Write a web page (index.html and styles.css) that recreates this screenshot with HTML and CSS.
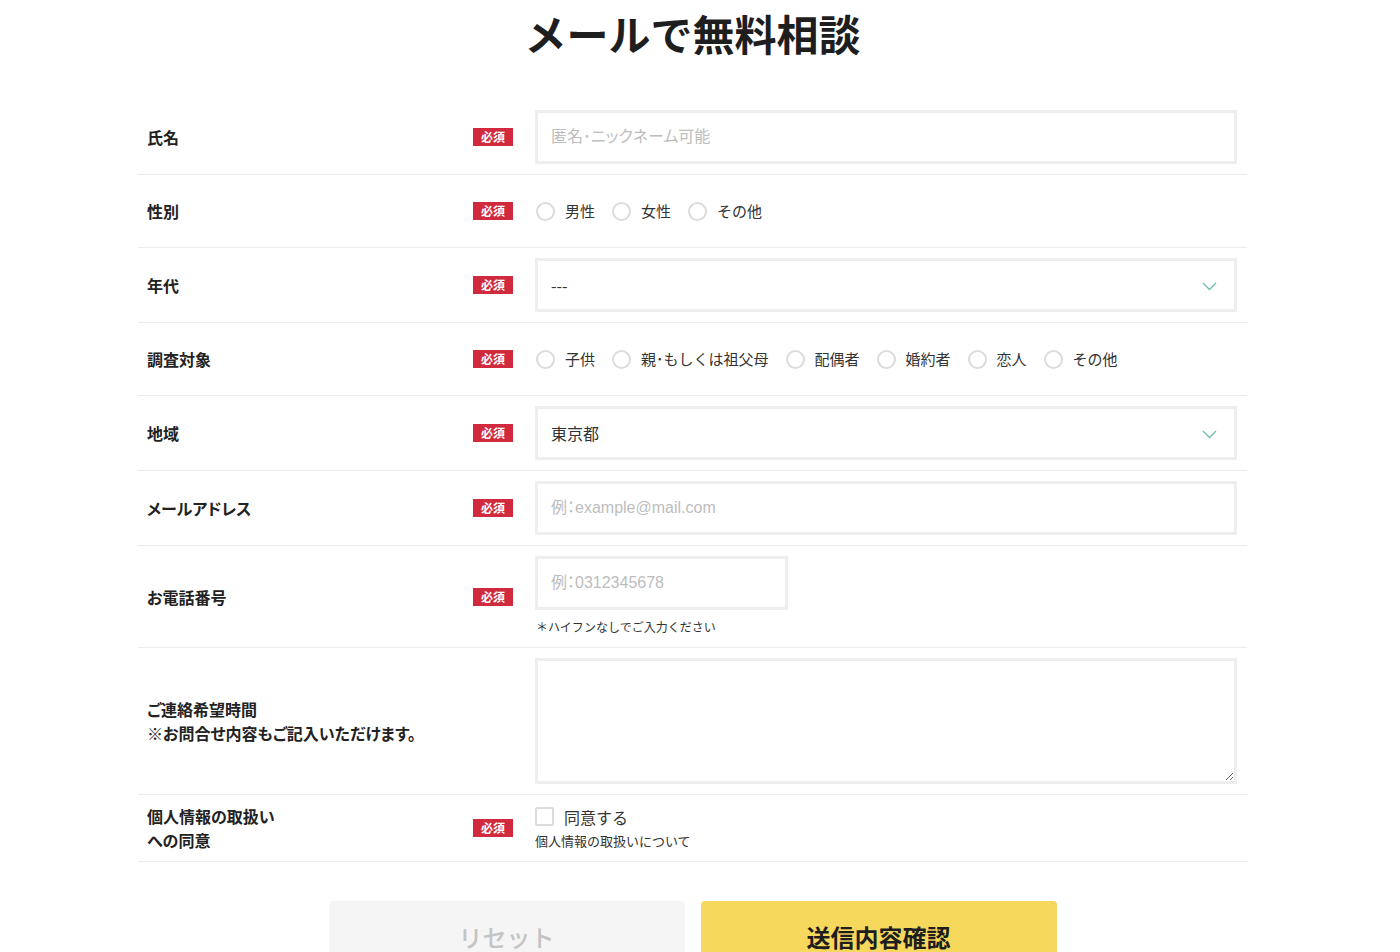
FILE: index.html
```html
<!DOCTYPE html>
<html lang="ja">
<head>
<meta charset="utf-8">
<title>メールで無料相談</title>
<link rel="stylesheet" href="styles.css">
</head>
<body>
<div class="page">
  <h1 class="title">メールで無料相談</h1>
  <form class="form">
    <div class="row">
      <div class="label">氏名</div>
      <div class="badge-cell"><span class="badge">必須</span></div>
      <div class="field"><input class="text-input" type="text" placeholder="匿名･ニックネーム可能"></div>
    </div>
    <div class="row">
      <div class="label">性別</div>
      <div class="badge-cell"><span class="badge">必須</span></div>
      <div class="field radios">
        <label class="radio"><span class="circle"></span>男性</label>
        <label class="radio"><span class="circle"></span>女性</label>
        <label class="radio"><span class="circle"></span>その他</label>
      </div>
    </div>
    <div class="row">
      <div class="label">年代</div>
      <div class="badge-cell"><span class="badge">必須</span></div>
      <div class="field">
        <div class="select">
          <span class="select-value">---</span>
          <svg class="chevron" width="15" height="9" viewBox="0 0 15 9"><polyline points="1,1 7.5,7.5 14,1" fill="none" stroke="#6dbcad" stroke-width="1.3"/></svg>
        </div>
      </div>
    </div>
    <div class="row">
      <div class="label">調査対象</div>
      <div class="badge-cell"><span class="badge">必須</span></div>
      <div class="field radios">
        <label class="radio"><span class="circle"></span>子供</label>
        <label class="radio"><span class="circle"></span>親･もしくは祖父母</label>
        <label class="radio"><span class="circle"></span>配偶者</label>
        <label class="radio"><span class="circle"></span>婚約者</label>
        <label class="radio"><span class="circle"></span>恋人</label>
        <label class="radio"><span class="circle"></span>その他</label>
      </div>
    </div>
    <div class="row">
      <div class="label">地域</div>
      <div class="badge-cell"><span class="badge">必須</span></div>
      <div class="field">
        <div class="select">
          <span class="select-value">東京都</span>
          <svg class="chevron" width="15" height="9" viewBox="0 0 15 9"><polyline points="1,1 7.5,7.5 14,1" fill="none" stroke="#6dbcad" stroke-width="1.3"/></svg>
        </div>
      </div>
    </div>
    <div class="row">
      <div class="label">メールアドレス</div>
      <div class="badge-cell"><span class="badge">必須</span></div>
      <div class="field"><input class="text-input" type="text" placeholder="例：example@mail.com"></div>
    </div>
    <div class="row">
      <div class="label">お電話番号</div>
      <div class="badge-cell"><span class="badge">必須</span></div>
      <div class="field">
        <input class="text-input tel" type="text" placeholder="例：0312345678">
        <p class="note">＊ハイフンなしでご入力ください</p>
      </div>
    </div>
    <div class="row">
      <div class="label">ご連絡希望時間<br>※お問合せ内容もご記入いただけます。</div>
      <div class="badge-cell"></div>
      <div class="field"><textarea class="textarea"></textarea></div>
    </div>
    <div class="row row-agree">
      <div class="label">個人情報の取扱い<br>への同意</div>
      <div class="badge-cell"><span class="badge">必須</span></div>
      <div class="field agree">
        <label class="check"><span class="box"></span>同意する</label>
        <p class="agree-note">個人情報の取扱いについて</p>
      </div>
    </div>
    <div class="buttons">
      <button type="button" class="btn btn-reset">リセット</button>
      <button type="button" class="btn btn-submit">送信内容確認</button>
    </div>
  </form>
</div>
</body>
</html>
```

FILE: styles.css
```css
* { box-sizing: border-box; }
html, body { margin: 0; padding: 0; background: #fff; }
body {
  font-family: "Noto Sans CJK JP", "Noto Sans", "Liberation Sans", sans-serif;
  color: #333;
  overflow: hidden;
}
.page { width: 1385px; }
.title {
  margin: 0;
  padding-top: 4px;
  height: 100px;
  text-align: center;
  font-size: 42px;
  line-height: 58px;
  font-weight: 700;
  color: #1e1e1e;
}
.form { width: 1109px; margin: 0 auto; }
.row {
  display: flex;
  align-items: center;
  padding: 10px 10px 10px 9px;
  border-bottom: 1px solid #ececec;
}
.row-agree { padding-top: 9px; padding-bottom: 9px; }
.label {
  width: 326px;
  font-size: 16px;
  font-weight: 700;
  line-height: 24px;
  color: #222;
  font-feature-settings: "palt";
}
.badge-cell { width: 62px; display: flex; }
.badge {
  display: inline-block;
  width: 40px;
  height: 18px;
  line-height: 18px;
  background: #d1293d;
  color: #fff;
  font-size: 12px;
  font-weight: 700;
  text-align: center;
}
.field { width: 702px; }
.text-input, .select {
  display: block;
  width: 702px;
  height: 54px;
  border: 3px solid #eeeeee;
  padding: 0 13px;
  font-family: "Liberation Sans", "Noto Sans CJK JP", sans-serif;
  font-size: 16px;
  color: #333;
  outline: none;
  background: #fff;
  font-feature-settings: "palt";
}
.text-input::placeholder { color: #bdbdbd; }
.text-input.tel { width: 253px; }
.select {
  position: relative;
  display: flex;
  align-items: center;
  font-family: "Noto Sans CJK JP", sans-serif;
}
.chevron { position: absolute; right: 17px; top: 21px; }
.radios {
  display: flex;
  align-items: center;
  height: 52px;
  gap: 16px;
}
.radio, .check {
  display: flex;
  align-items: center;
  gap: 10px;
  font-size: 15px;
  color: #333;
  line-height: 24px;
}
.check { font-size: 16px; }
.circle {
  width: 19px;
  height: 19px;
  border-radius: 50%;
  border: 2px solid #dcdcdc;
  margin-left: 1px;
}
.note {
  margin: 7px 0 0 1px;
  font-size: 12px;
  line-height: 20px;
  color: #333;
}
.textarea {
  display: block;
  width: 702px;
  height: 126px;
  border: 3px solid #eeeeee;
  outline: none;
  font-family: inherit;
  font-size: 16px;
  resize: vertical;
}
.box {
  width: 19px;
  height: 19px;
  border: 2px solid #dcdcdc;
  border-radius: 2px;
}
.agree-note {
  margin: 1px 0 0;
  font-size: 13px;
  line-height: 22px;
  color: #333;
}
.buttons {
  display: flex;
  justify-content: center;
  gap: 16px;
  margin-top: 39px;
}
.btn {
  width: 356px;
  height: 72px;
  border: none;
  border-radius: 4px;
  font-family: inherit;
  font-size: 24px;
  line-height: 70px;
  padding: 0;
}
.btn-reset { background: #f5f5f5; color: #c4c4c4; font-weight: 500; }
.btn-submit { background: #f6d95c; color: #1e1e1e; font-weight: 700; }
```
